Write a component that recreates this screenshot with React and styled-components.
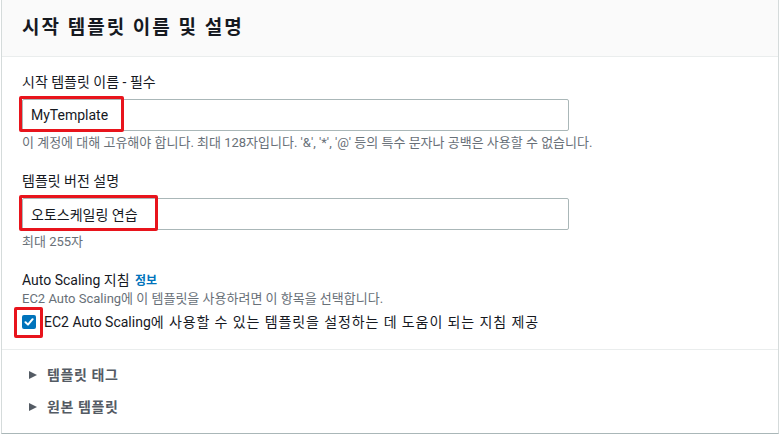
import React from 'react'
import styled, { createGlobalStyle } from 'styled-components'

const GlobalStyle = createGlobalStyle`
  html, body {
    margin: 0;
    padding: 0;
    background: #ffffff;
  }
  body {
    font-family: "Roboto", "Noto Sans CJK KR", "Noto Sans", sans-serif;
    color: #16191f;
  }
`

const FIELDS = [
  {
    label: '시작 템플릿 이름',
    required: true,
    value: 'MyTemplate',
    mark: 105,
    help: "이 계정에 대해 고유해야 합니다. 최대 128자입니다. '&', '*', '@' 등의 특수 문자나 공백은 사용할 수 없습니다.",
  },
  {
    label: '템플릿 버전 설명',
    value: '오토스케일링 연습',
    mark: 139,
    help: '최대 255자',
  },
]

const App = () => {
  return (
    <>
      <GlobalStyle />
      <Panel>
        <Header>
          <h2>시작 템플릿 이름 및 설명</h2>
        </Header>
        <Body>
          {FIELDS.map(f => (
            <Field key={f.label}>
              <Label>
                {f.label}
                {f.required && <Required> - 필수</Required>}
              </Label>
              <InputWrap>
                <Input readOnly value={f.value} />
                <Highlight style={{ width: f.mark }} />
              </InputWrap>
              <Help>{f.help}</Help>
            </Field>
          ))}
          <Field>
            <Label>
              Auto Scaling 지침 <InfoLink>정보</InfoLink>
            </Label>
            <Help className="top">EC2 Auto Scaling에 이 템플릿을 사용하려면 이 항목을 선택합니다.</Help>
            <CheckRow>
              <CheckWrap>
                <Checkbox>
                  <svg width="10" height="10" viewBox="0 0 10 10">
                    <path d="M1.5 5.2 L4 7.6 L8.6 2.2" fill="none" stroke="#fff" strokeWidth="2" strokeLinecap="round" strokeLinejoin="round" />
                  </svg>
                </Checkbox>
                <CheckHighlight />
              </CheckWrap>
              <span>
                EC2 Auto Scaling
                <Ko>에 사용할 수 있는 템플릿을 설정하는 데 도움이 되는 지침 제공</Ko>
              </span>
            </CheckRow>
          </Field>
        </Body>
        <Expanders>
          <Expander>
            <Caret />
            템플릿 태그
          </Expander>
          <Expander>
            <Caret />
            원본 템플릿
          </Expander>
        </Expanders>
      </Panel>
    </>
  )
}

export default App

const Panel = styled.div`
  margin-left: 1px;
  width: 778px;
  height: 434px;
  box-sizing: border-box;
  border: 1px solid #d5dbdb;
  border-top: none;
  border-bottom-color: #aab7b8;
  background: #fff;
  display: flex;
  flex-direction: column;
`

const Header = styled.div`
  height: 57px;
  background: #fafafa;
  border-bottom: 1px solid #eaeded;
  padding: 0 20px 5px;
  box-sizing: border-box;
  display: flex;
  align-items: center;
  & h2 {
    margin: 0;
    font-size: 19px;
    font-weight: 700;
    letter-spacing: 2px;
    color: #16191f;
  }
`

const Body = styled.div`
  padding: 16px 20px 17px;
  border-bottom: 1px solid #eaeded;
  display: flex;
  flex-direction: column;
  gap: 21px;
`

const Field = styled.div`
  display: flex;
  flex-direction: column;
`

const Label = styled.div`
  font-size: 14px;
  line-height: 18px;
  color: #16191f;
  margin-bottom: 8px;
`

const Required = styled.span`
  color: #16191f;
`

const InfoLink = styled.span`
  color: #0073bb;
  font-size: 12px;
  font-weight: 700;
  margin-left: 2px;
`

const InputWrap = styled.div`
  position: relative;
  width: 547px;
`

const Input = styled.input`
  display: block;
  width: 100%;
  height: 32px;
  box-sizing: border-box;
  border: 1px solid #aab7b8;
  border-radius: 2px;
  padding: 0 8px;
  font-family: "Roboto", "Noto Sans CJK KR", sans-serif;
  font-size: 14px;
  color: #16191f;
  outline: none;
  background: #fff;
`

const Highlight = styled.div`
  position: absolute;
  left: -3px;
  top: -3px;
  height: 36px;
  box-sizing: border-box;
  border: 3px solid #e8141c;
  border-radius: 2px;
  pointer-events: none;
`

const Help = styled.div`
  font-size: 13px;
  line-height: 17px;
  color: #687078;
  margin-top: 3px;
  &.top {
    margin-top: -8px;
  }
`

const CheckRow = styled.div`
  display: flex;
  align-items: center;
  gap: 8px;
  margin-top: 5px;
  font-size: 14px;
  line-height: 20px;
  color: #16191f;
`

const Ko = styled.span`
  letter-spacing: 0.9px;
`

const CheckWrap = styled.div`
  position: relative;
  width: 14px;
  height: 14px;
`

const Checkbox = styled.div`
  width: 14px;
  height: 14px;
  border-radius: 2px;
  background: #0073bb;
  display: flex;
  align-items: center;
  justify-content: center;
`

const CheckHighlight = styled.div`
  position: absolute;
  left: -8px;
  top: -8px;
  width: 29px;
  height: 31px;
  box-sizing: border-box;
  border: 3px solid #e8141c;
  border-radius: 2px;
`

const Expanders = styled.div`
  padding: 16px 20px 0 27px;
  display: flex;
  flex-direction: column;
  gap: 14px;
`

const Expander = styled.div`
  display: flex;
  align-items: center;
  gap: 10px;
  font-size: 14px;
  font-weight: 700;
  line-height: 18px;
  letter-spacing: 0.6px;
  color: #545b64;
`

const Caret = styled.span`
  width: 0;
  height: 0;
  border-top: 4.5px solid transparent;
  border-bottom: 4.5px solid transparent;
  border-left: 8px solid #545b64;
`
